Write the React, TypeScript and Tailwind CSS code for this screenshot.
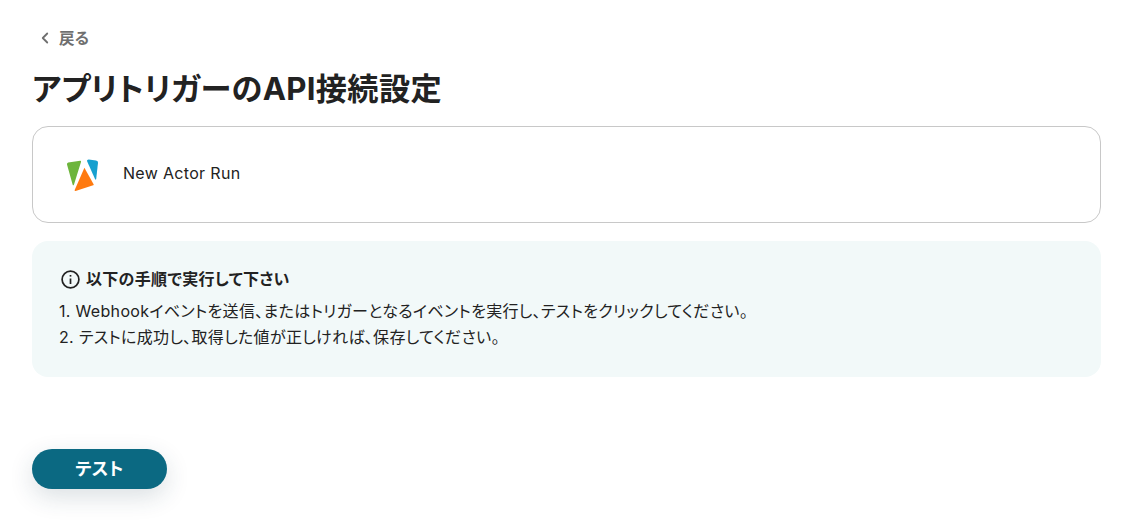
import { ChevronLeft } from "lucide-react";

const fontStack = "[font-family:Inter,'Noto_Sans_CJK_JP',sans-serif] [font-feature-settings:'palt']";

function ApifyLogo() {
  return (
    <svg width="34" height="36" viewBox="0 0 34 36" className="mt-[3px]">
      <path d="M2.2 5.6 L14.2 3.8 Q15.4 3.8 15 5 L8 27.5 Q7.2 29.2 6.6 27.5 L1 7.5 Q0.8 6 2.2 5.6 Z" fill="#6DB53C" />
      <path d="M22.6 2.4 L30 3.4 Q32.2 3.8 32 5.8 L30.2 22 Q29.8 23.6 29 22 L21 4 Q20.8 2.4 22.6 2.4 Z" fill="#16A0CF" />
      <path d="M18.4 10.8 L27.6 27.2 Q28 28 27.2 28.3 L9.6 34 Q8.4 34.2 8.7 33 Z" fill="#FF7A0F" />
    </svg>
  );
}

export default function App() {
  return (
    <div className={`${fontStack} min-h-screen bg-white px-8 pt-[28px] text-[#222] text-base tracking-[0.02em]`}>
      <button className="flex items-center gap-[5px] h-[20px] pl-[4px] text-[15.5px] leading-[22px] font-bold text-[#6f6f6f]">
        <ChevronLeft size={18} strokeWidth={2.4} />
        <span className="pt-[2px]">戻る</span>
      </button>

      <h1 className="mt-[19px] text-[31.2px] leading-[44px] font-bold text-[#222]">
        アプリトリガーのAPI接続設定
      </h1>

      <div className="mt-[15px] w-[1069px] h-[97px] flex items-center gap-[23px] pl-[33px] pb-[3px] rounded-[16px] border border-[#c8c8c8] bg-white">
        <ApifyLogo />
        <span className="text-[#222]">New Actor Run</span>
      </div>

      <div className="mt-[18px] w-[1069px] h-[136px] rounded-[16px] bg-[#f2f9f9] pl-[27px] pt-[27px]">
        <div className="flex items-center gap-[5px] h-[22px] pl-[1px]">
          <svg width="21" height="21" viewBox="0 0 21 21" fill="none" stroke="#222" strokeWidth="1.7">
            <circle cx="10.5" cy="10.5" r="8.4" />
            <path d="M10.5 9.5 V15" />
            <path d="M10.5 6 V7.6" />
          </svg>
          <span className="font-bold">以下の手順で実行して下さい</span>
        </div>
        <ol className="mt-[9px] leading-[25.6px] text-[#222]">
          <li>1. Webhookイベントを送信、またはトリガーとなるイベントを実行し、テストをクリックしてください。</li>
          <li>2. テストに成功し、取得した値が正しければ、保存してください。</li>
        </ol>
      </div>

      <button className="mt-[72px] block w-[135px] h-[40px] rounded-full bg-[#0b6982] text-white text-[17.6px] font-bold shadow-[0_8px_24px_rgba(30,60,80,0.16)]">
        テスト
      </button>
    </div>
  );
}
